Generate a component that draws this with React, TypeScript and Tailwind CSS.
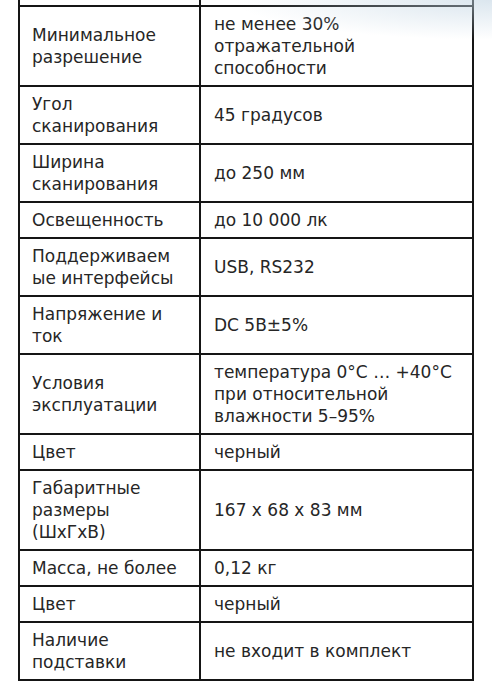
import React from 'react';

type Spec = { name: string[]; value: string[] };

const SPECS: Spec[] = [
  { name: ['Минимальное', 'разрешение'], value: ['не менее 30%', 'отражательной', 'способности'] },
  { name: ['Угол', 'сканирования'], value: ['45 градусов'] },
  { name: ['Ширина', 'сканирования'], value: ['до 250 мм'] },
  { name: ['Освещенность'], value: ['до 10 000 лк'] },
  { name: ['Поддерживаем', 'ые интерфейсы'], value: ['USB, RS232'] },
  { name: ['Напряжение и', 'ток'], value: ['DC 5В±5%'] },
  { name: ['Условия', 'эксплуатации'], value: ['температура 0°C … +40°C', 'при относительной', 'влажности 5–95%'] },
  { name: ['Цвет'], value: ['черный'] },
  { name: ['Габаритные', 'размеры', '(ШхГхВ)'], value: ['167 х 68 х 83 мм'] },
  { name: ['Масса, не более'], value: ['0,12 кг'] },
  { name: ['Цвет'], value: ['черный'] },
  { name: ['Наличие', 'подставки'], value: ['не входит в комплект'] },
];

const Lines: React.FC<{ lines: string[] }> = ({ lines }) => (
  <div>
    {lines.map((l, i) => (
      <span key={i} className="block whitespace-nowrap">
        {l}
      </span>
    ))}
  </div>
);

const SpecRow: React.FC<{ spec: Spec }> = ({ spec }) => (
  <div className="flex border-b-2 border-[#151515]">
    <div className="w-[181px] shrink-0 border-r-2 border-[#151515] pl-[12px] py-[6px] flex items-center">
      <Lines lines={spec.name} />
    </div>
    <div className="flex-1 pl-[13px] py-[6px] flex items-center">
      <Lines lines={spec.value} />
    </div>
  </div>
);

export default function App() {
  return (
    <div
      className="relative w-[492px] h-[700px] overflow-hidden bg-white text-[#262626] text-[17px] leading-[22px]"
      style={{ fontFamily: '"DejaVu Sans", sans-serif' }}
    >
      <div className="ml-[18px] w-[456px] border-x-2 border-[#151515]">
        <div className="flex h-[7px] border-b-2 border-[#151515]">
          <div className="w-[181px] shrink-0 border-r-2 border-[#151515]" />
          <div className="flex-1" />
        </div>
        {SPECS.map((s, i) => (
          <SpecRow key={i} spec={s} />
        ))}
      </div>
      <div className="pointer-events-none absolute right-0 top-0 h-[40px] w-[260px] bg-[radial-gradient(ellipse_at_top_right,rgba(190,210,225,0.55),rgba(255,255,255,0)_70%)]" />
    </div>
  );
}
